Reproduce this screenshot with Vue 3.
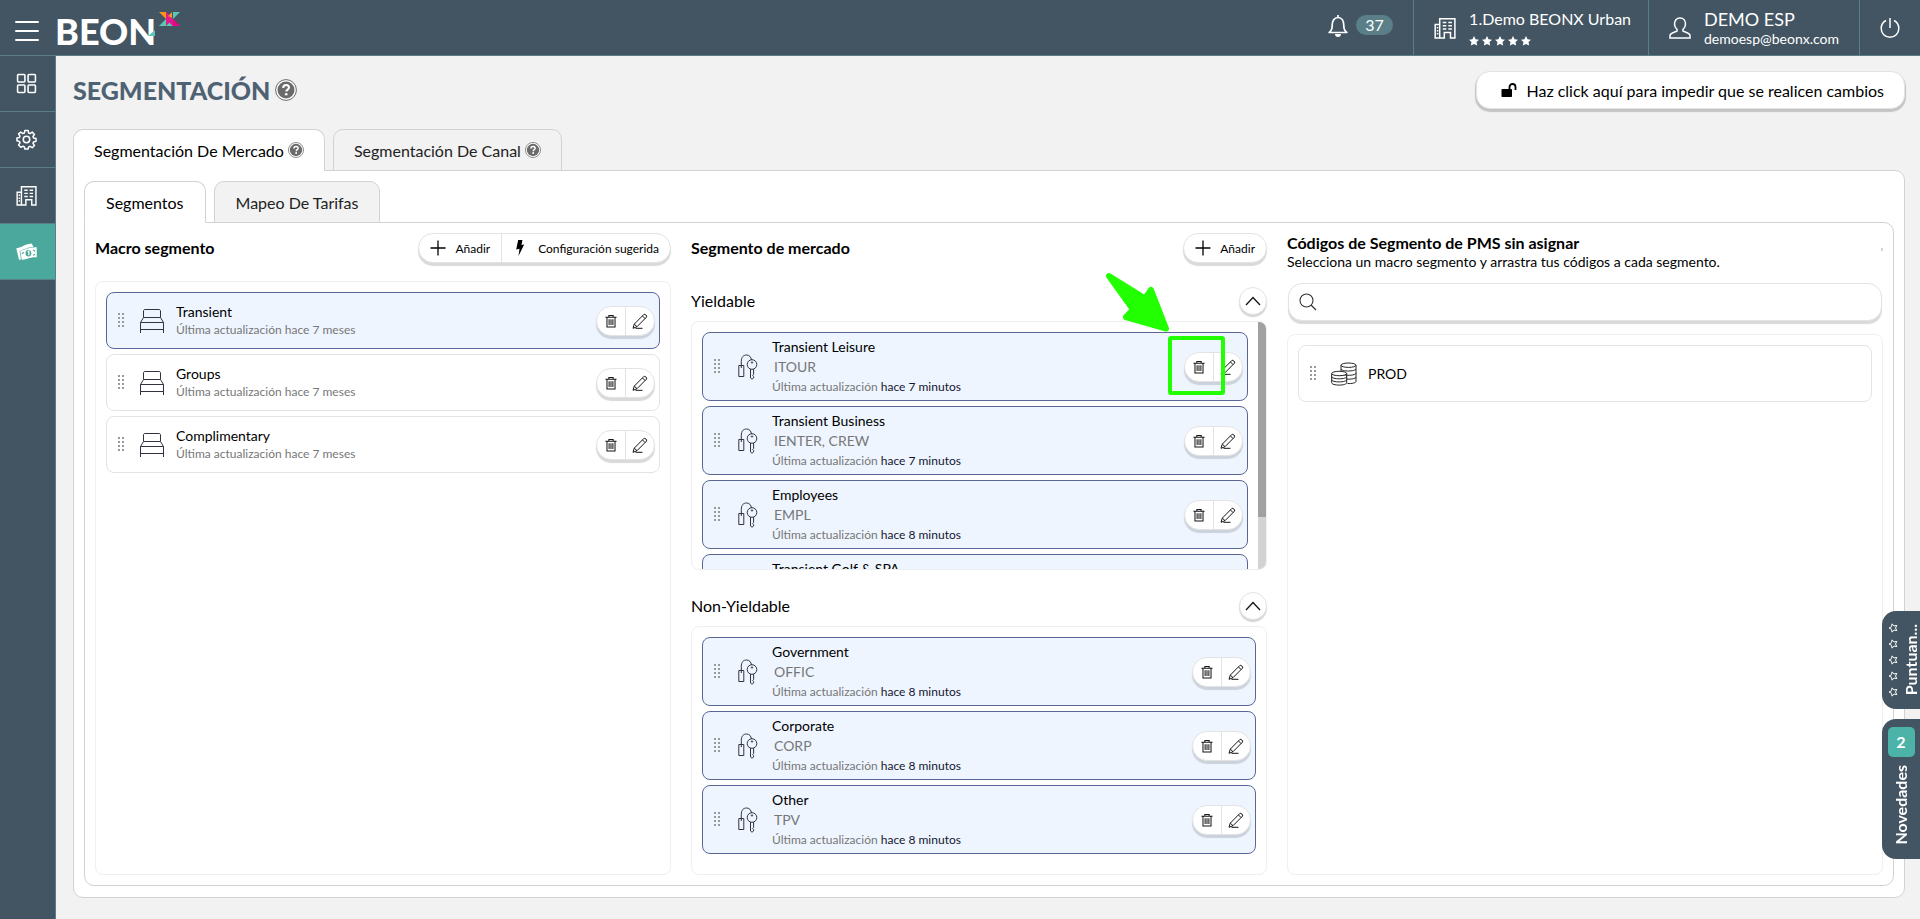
<script setup>
import { ref } from 'vue'

const search = ref('')

const sideItems = [
  { icon: 'i-grid', label: 'Panel' },
  { icon: 'i-gear', label: 'Ajustes' },
  { icon: 'i-building', label: 'Hotel' },
  { icon: 'i-money', label: 'Tarifas', active: true }
]

const macroSegments = [
  { name: 'Transient', selected: true },
  { name: 'Groups' },
  { name: 'Complimentary' }
]

const marketGroups = [
  {
    name: 'Yieldable',
    scroll: true,
    items: [
      { name: 'Transient Leisure', codes: 'ITOUR', ago: 'hace 7 minutos' },
      { name: 'Transient Business', codes: 'IENTER, CREW', ago: 'hace 7 minutos' },
      { name: 'Employees', codes: 'EMPL', ago: 'hace 8 minutos' },
      { name: 'Transient Golf & SPA' }
    ]
  },
  {
    name: 'Non-Yieldable',
    scroll: false,
    items: [
      { name: 'Government', codes: 'OFFIC', ago: 'hace 8 minutos' },
      { name: 'Corporate', codes: 'CORP', ago: 'hace 8 minutos' },
      { name: 'Other', codes: 'TPV', ago: 'hace 8 minutos' }
    ]
  }
]
</script>

<template>
  <svg class="sprite" aria-hidden="true">
    <symbol id="i-grid" viewBox="0 0 20 20">
      <g fill="none" stroke="currentColor" stroke-width="1.5">
        <rect x="1.5" y="1.5" width="7" height="7" rx="0.8" /><rect x="11.5" y="1.5" width="7" height="7" rx="0.8" />
        <rect x="1.5" y="11.5" width="7" height="7" rx="0.8" /><rect x="11.5" y="11.5" width="7" height="7" rx="0.8" />
      </g>
    </symbol>
    <symbol id="i-gear" viewBox="0 0 22 22">
      <g fill="none" stroke="currentColor" stroke-width="1.6" stroke-linejoin="round">
        <path d="M9.3 1.5h3.4l.5 2.7 1.5.6 2.3-1.5 2.3 2.4-1.5 2.2.6 1.6 2.6.5v2.900l-2.600.6-.6 1.500 1.500 2.300-2.300 2.300-2.300-1.500-1.500.6-.5 2.300H9.300l-.5-2.300-1.500-.6L5 19.100l-2.300-2.300 1.500-2.300-.6-1.500L1 12.400V9.500L3.600 9l.6-1.600-1.500-2.200L5 3.300l2.300 1.500 1.500-.6z" />
        <circle cx="11" cy="11" r="3.400" />
      </g>
    </symbol>
    <symbol id="i-building" viewBox="0 0 22 22">
      <g fill="none" stroke="currentColor" stroke-width="1.500">
        <path d="M5.700 21V1.800h15.200V21h-4.400v-5.500h-6.200V21z M5.500 7.500H1.200V21H6" />
        <path d="M8.700 5.500h3.600M14.300 5.500h3.600M8.700 8.800h3.600M14.300 8.800h3.600M8.700 12h3.600M14.300 12h3.600M2.800 10.800h1.500M2.800 13.800h1.500M2.800 16.800h1.500" />
      </g>
    </symbol>
    <symbol id="i-money" viewBox="0 0 22 18">
      <path d="M.3 5.500C5 5.500 8 1.500 16.500.6l1.800 3.600C11 4.500 8 7.500 3.700 7.900l1.500 9.300-2 .6z" fill="currentColor" />
      <path d="M4.300 7.600C9 8 13 4 21.700 4.500V15.200c-8-.5-11 3-15.700 2.500z" fill="currentColor" />
      <ellipse cx="13" cy="10.800" rx="3" ry="3.500" fill="#4ba89d" />
      <path d="M12.200 9.500l1.300-.8v4.200" fill="none" stroke="#fff" stroke-width="1.300" />
      <path d="M6.300 11.500l2-1.700M18 7.300l2 1.500M18 13l2-1" stroke="#4ba89d" stroke-width="1.200" />
    </symbol>
    <symbol id="i-bell" viewBox="0 0 20 24">
      <path d="M10 1v2.500M1.200 18.500c2.500-1.800 3-3.500 3-7 0-4.500 2-8 5.800-8s5.800 3.500 5.800 8c0 3.500.5 5.200 3 7z" fill="none" stroke="currentColor" stroke-width="1.700" stroke-linejoin="round" />
      <path d="M7 20h6c0 2-1.300 3-3 3s-3-1-3-3z" fill="currentColor" />
    </symbol>
    <symbol id="i-user" viewBox="0 0 22 22">
      <path d="M11 1c-3.600 0-5.500 2.700-5.500 6 0 2.500 1.300 4.300 2.500 5.300v1.800C5.500 15.300 1 16 1 18.500V21h20v-2.500c0-2.500-4.500-3.200-7-4.400v-1.800c1.200-1 2.500-2.800 2.500-5.300 0-3.300-1.900-6-5.500-6z" fill="none" stroke="currentColor" stroke-width="1.500" />
    </symbol>
    <symbol id="i-power" viewBox="0 0 20 22">
      <path d="M10 1v10M6 3.500C3 5 1.200 8 1.200 11.500a8.800 8.800 0 0 0 17.600 0C18.800 8 17 5 14 3.500" fill="none" stroke="currentColor" stroke-width="1.500" />
    </symbol>
    <symbol id="i-star" viewBox="0 0 12 12">
      <path d="M6 0l1.900 3.900 4.100.5-3 2.900.8 4.200L6 9.500l-3.800 2 .8-4.200L0 4.400l4.100-.5z" fill="currentColor" />
    </symbol>
    <symbol id="i-star-o" viewBox="0 0 12 12">
      <path d="M6 1.200l1.500 3.100 3.500.5-2.500 2.400.6 3.400L6 9l-3.100 1.600.6-3.400L1 4.800l3.500-.5z" fill="none" stroke="currentColor" stroke-width="1.200" />
    </symbol>
    <symbol id="i-unlock" viewBox="0 0 16 14">
      <rect x="0.500" y="6" width="10.500" height="8" rx="0.800" fill="currentColor" />
      <path d="M8.500 6V4a3 3 0 0 1 6 0v3" fill="none" stroke="currentColor" stroke-width="1.800" />
    </symbol>
    <symbol id="i-help" viewBox="0 0 22 22">
      <circle cx="11" cy="11" r="10.400" fill="#fff" stroke="#6b6b6b" stroke-width="1" />
      <circle cx="11" cy="11" r="8.500" fill="#6b6b6b" />
      <path d="M8.200 9c0-1.900 1.200-2.900 2.900-2.900s2.900 1 2.900 2.500c0 2-2.700 2-2.700 4" fill="none" stroke="#fff" stroke-width="2" />
      <circle cx="11.200" cy="15.200" r="1.300" fill="#fff" />
    </symbol>
    <symbol id="i-plus" viewBox="0 0 16 16">
      <path d="M8 .5v15M.5 8h15" stroke="currentColor" stroke-width="1.300" />
    </symbol>
    <symbol id="i-bolt" viewBox="0 0 10 16">
      <path d="M3.200 0h4.200L6.500 5l2.700-.6L3.500 16l1-7.200-3.300.8z" fill="currentColor" />
    </symbol>
    <symbol id="i-grip" viewBox="0 0 6 16">
      <g fill="#9a9a9a">
        <rect width="2" height="2" /><rect x="4" width="2" height="2" />
        <rect y="4" width="2" height="2" /><rect x="4" y="4" width="2" height="2" />
        <rect y="8" width="2" height="2" /><rect x="4" y="8" width="2" height="2" />
        <rect y="12" width="2" height="2" /><rect x="4" y="12" width="2" height="2" />
      </g>
    </symbol>
    <symbol id="i-bed" viewBox="0 0 26 26">
      <path d="M1.500 25V14.500L4.500 9.500V3c0-1 .7-1.500 1.500-1.500h14c.8 0 1.500.5 1.500 1.500v6.500l3 5V25M4.500 9.500h17M1.500 14.500h23M1.500 21.500h23" fill="none" stroke="#33333f" stroke-width="1" />
    </symbol>
    <symbol id="i-key" viewBox="0 0 20 26">
      <g fill="none" stroke="#33333f" stroke-width="1">
        <path d="M.8 11.500h5v11h-5zM3.300 14V7.500C3.300 3 5.500 1 8.500 1s4.500 2 5 5" />
        <circle cx="14" cy="10.500" r="4.800" /><circle cx="14" cy="8.500" r="0.700" />
        <path d="M12.500 15v9l1.500 1.200 1.600-1.200v-1.500l-.9-1 .9-1V15" />
      </g>
    </symbol>
    <symbol id="i-trash" viewBox="0 0 14 16">
      <path d="M.5 3.500h13M4.500 3.500v-2h5v2M2.300 3.500V15h9.400V3.500M4.800 6v6.800M7 6v6.800M9.200 6v6.800" fill="none" stroke="#151515" stroke-width="1.200" />
    </symbol>
    <symbol id="i-pencil" viewBox="0 0 16 16">
      <path d="M1 15.300l1.300-4.200L11.800 1.500c1-1 3.700 1.500 2.700 2.600L5 13.700zM2.300 11.100L5 13.700M10.500 3l2.600 2.600M3.500 15.300h7" fill="none" stroke="#151515" stroke-width="1" />
    </symbol>
    <symbol id="i-chevron" viewBox="0 0 16 10">
      <path d="M1 9l7-7.500L15 9" fill="none" stroke="#151515" stroke-width="1.300" />
    </symbol>
    <symbol id="i-search" viewBox="0 0 18 18">
      <circle cx="7.500" cy="7.500" r="6.500" fill="none" stroke="#333" stroke-width="1.100" />
      <path d="M12 12l5 5" stroke="#333" stroke-width="1.200" />
    </symbol>
    <symbol id="i-coins" viewBox="0 0 26 24">
      <g fill="none" stroke="#222" stroke-width="1">
        <ellipse cx="17.500" cy="3.200" rx="7.500" ry="2.200" />
        <path d="M10 3.200v6M25 3.200V19.500c0 1.300-4 2.300-8.500 2M10 7c.5 1.500 4 2 7.500 2s7-.8 7.500-2M13 12.800c4 1 11 .5 12-1.500M15.800 17c4 .5 8.700-.3 9.200-1.800" />
        <ellipse cx="8.200" cy="11.500" rx="7.500" ry="2.200" fill="#fff" />
        <path d="M.7 11.500v9.300c0 1.300 3.500 2.300 7.500 2.300s7.500-1 7.500-2.300v-9.300M.7 14.600c0 1.300 3.500 2.200 7.500 2.200s7.500-.9 7.500-2.200M.7 17.700c0 1.300 3.500 2.200 7.500 2.200s7.500-.9 7.500-2.200" />
      </g>
    </symbol>
  </svg>

  <div class="app">
    <header class="topbar">
      <button class="menu" aria-label="Menú"><span></span><span></span><span></span></button>
      <a class="logo" href="#" aria-label="BEONX">
        <span class="logo-text">BEON</span>
        <svg class="logo-notch" viewBox="0 0 7 6"><path d="M7 0v6H0z" fill="#5cc8b4" /></svg>
        <svg class="logo-x" viewBox="0 0 21 14">
          <path d="M0 0h7v7z" fill="#f7941d" /><path d="M7 0l7 7H7z" fill="#e6178f" />
          <path d="M13 0v6L9 4z" fill="#f7941d" /><path d="M14 0h7l-7 7z" fill="#5cc8b4" />
          <path d="M0 14l7-7v7z" fill="#5cc8b4" /><path d="M7 7h7l-7 7z" fill="#e6178f" />
          <path d="M7 14l3.500-3.500L14 14z" fill="#5cc8b4" /><path d="M14 7l7 7h-7z" fill="#ec008c" />
          <path d="M10.500 10.500L14 7v7z" fill="#e6178f" />
        </svg>
      </a>
      <div class="spacer"></div>
      <button class="alerts" aria-label="Notificaciones">
        <svg class="bell"><use href="#i-bell" /></svg>
        <span class="count">37</span>
      </button>
      <button class="top-cell hotel">
        <svg class="i22"><use href="#i-building" /></svg>
        <span class="cell-text">
          <span class="hotel-name">1.Demo BEONX Urban</span>
          <span class="stars"><svg v-for="n in 5" :key="n"><use href="#i-star" /></svg></span>
        </span>
      </button>
      <button class="top-cell user">
        <svg class="i22"><use href="#i-user" /></svg>
        <span class="cell-text">
          <span class="user-name">DEMO ESP</span>
          <span class="user-mail">demoesp@beonx.com</span>
        </span>
      </button>
      <button class="top-cell power" aria-label="Salir"><svg><use href="#i-power" /></svg></button>
    </header>

    <div class="body">
      <nav class="side">
        <a v-for="s in sideItems" :key="s.icon" href="#" :aria-label="s.label" :class="{ active: s.active }">
          <svg><use :href="'#' + s.icon" /></svg>
        </a>
      </nav>

      <main class="main">
        <div class="page-head">
          <h1>SEGMENTACIÓN</h1>
          <svg class="i22 help"><use href="#i-help" /></svg>
          <div class="spacer"></div>
          <button class="lock"><svg><use href="#i-unlock" /></svg>Haz click aquí para impedir que se realicen cambios</button>
        </div>

        <div class="tabs">
          <button class="tab on">Segmentación De Mercado<svg><use href="#i-help" /></svg></button>
          <button class="tab">Segmentación De Canal<svg><use href="#i-help" /></svg></button>
        </div>
        <div class="panel outer">
          <div class="tabs">
            <button class="tab on">Segmentos</button>
            <button class="tab">Mapeo De Tarifas</button>
          </div>
          <div class="panel inner">
            <section class="col">
              <div class="col-head">
                <h2>Macro segmento</h2>
                <div class="pill">
                  <button class="add"><svg><use href="#i-plus" /></svg>Añadir</button>
                  <button class="suggest"><svg><use href="#i-bolt" /></svg>Configuración sugerida</button>
                </div>
              </div>
              <div class="list">
                <div class="cards">
                  <article v-for="m in macroSegments" :key="m.name" class="card" :class="{ selected: m.selected }">
                    <svg class="grip"><use href="#i-grip" /></svg>
                    <svg class="bed"><use href="#i-bed" /></svg>
                    <div class="info">
                      <div class="name">{{ m.name }}</div>
                      <div class="updated">Última actualización hace 7 meses</div>
                    </div>
                    <div class="pill tools">
                      <button aria-label="Eliminar"><svg class="trash"><use href="#i-trash" /></svg></button>
                      <button aria-label="Editar"><svg class="pencil"><use href="#i-pencil" /></svg></button>
                    </div>
                  </article>
                </div>
              </div>
            </section>

            <section class="col market">
              <div class="col-head">
                <h2>Segmento de mercado</h2>
                <div class="pill">
                  <button class="add"><svg><use href="#i-plus" /></svg>Añadir</button>
                </div>
              </div>
              <div v-for="g in marketGroups" :key="g.name" class="group">
                <div class="group-head">
                  <h3>{{ g.name }}</h3>
                  <button class="round" aria-label="Plegar"><svg><use href="#i-chevron" /></svg></button>
                </div>
                <div class="list">
                  <div class="cards">
                    <article v-for="s in g.items" :key="s.name" class="card tall selected">
                      <svg class="grip"><use href="#i-grip" /></svg>
                      <svg class="key"><use href="#i-key" /></svg>
                      <div class="info">
                        <div class="name">{{ s.name }}</div>
                        <div v-if="s.codes" class="codes">{{ s.codes }}</div>
                        <div v-if="s.ago" class="updated">Última actualización <b>{{ s.ago }}</b></div>
                      </div>
                      <div class="pill tools">
                        <button aria-label="Eliminar"><svg class="trash"><use href="#i-trash" /></svg></button>
                        <button aria-label="Editar"><svg class="pencil"><use href="#i-pencil" /></svg></button>
                      </div>
                    </article>
                  </div>
                  <div v-if="g.scroll" class="track"><div class="thumb"></div></div>
                </div>
              </div>
              <svg class="callout" viewBox="0 0 122 126" aria-hidden="true">
                <path d="M5 5L41 27.500 47 19l15 38.500L22 46l7-7.500z" fill="#2f0" stroke="#2f0" stroke-width="6" stroke-linejoin="round" />
                <rect x="66" y="67" width="53" height="55" rx="1" fill="none" stroke="#2f0" stroke-width="4" />
              </svg>
            </section>

            <section class="col">
              <h2 class="pms-title">Códigos de Segmento de PMS sin asignar</h2>
              <p class="pms-sub">Selecciona un macro segmento y arrastra tus códigos a cada segmento.</p>
              <span class="mark"></span>
              <label class="search">
                <svg><use href="#i-search" /></svg>
                <input v-model="search" type="text" aria-label="Buscar código" />
              </label>
              <div class="list">
                <div class="cards">
                  <article class="card">
                    <svg class="grip"><use href="#i-grip" /></svg>
                    <svg class="coins"><use href="#i-coins" /></svg>
                    <div class="info"><div class="name">PROD</div></div>
                  </article>
                </div>
              </div>
            </section>
          </div>
        </div>
      </main>
    </div>

    <div class="floaters">
      <button class="floater rate">
        <span class="rate-stars"><svg v-for="n in 5" :key="n"><use href="#i-star-o" /></svg></span>
        <span class="vertical">Puntuan...</span>
      </button>
      <button class="floater news">
        <span class="badge">2</span>
        <span class="vertical">Novedades</span>
      </button>
    </div>
  </div>
</template>

<style>
body { margin: 0; background: #f2f2f2; }
</style>

<style scoped>
.sprite { position: absolute; width: 0; height: 0; }
* { box-sizing: border-box; }
svg { display: block; flex: none; }
h1, h2, h3, p { margin: 0; }
button, input { font: inherit; color: inherit; border: 0; background: none; padding: 0; margin: 0; }
button { cursor: pointer; }

.app {
  display: flex;
  flex-direction: column;
  height: 100vh;
  min-height: 700px;
  overflow: hidden;
  background: #f2f2f2;
  color: #000;
  font-family: Lato, "Liberation Sans", sans-serif;
  font-size: 16px;
}
.spacer { flex: 1; }
.i22 { width: 22px; height: 22px; }

.topbar {
  display: flex;
  align-items: stretch;
  height: 56px;
  flex: none;
  background: #435563;
  border-bottom: 1px solid #5b7f88;
  color: #fff;
}
.menu { display: flex; flex-direction: column; justify-content: center; gap: 7px; margin: 6px 16px 0 15px; width: 24px; }
.menu span { height: 2px; border-radius: 1px; background: #fff; }
.logo { position: relative; display: block; width: 124px; color: #fff; text-decoration: none; }
.logo-text { display: block; padding-top: 9px; font-size: 36px; line-height: 44px; font-weight: 900; }
.logo-notch { position: absolute; left: 93px; top: 30px; width: 7px; height: 6px; }
.logo-x { position: absolute; left: 104px; top: 12px; width: 21px; height: 14px; }
.alerts { display: flex; align-items: flex-start; gap: 8px; padding: 14px 20px 0 0; }
.bell { width: 20px; height: 24px; }
.count { width: 37px; height: 20px; margin-top: 1px; border-radius: 10px; background: #5b7f88; font-size: 16px; line-height: 20px; }
.top-cell { display: flex; align-items: center; padding: 0 19px; gap: 13px; border-left: 1px solid #5b7f88; text-align: left; }
.cell-text { display: block; }
.hotel { padding: 0 17px 0 20px; }
.hotel-name { display: block; font-size: 16px; line-height: 20px; }
.stars { display: flex; gap: 3px; padding-top: 7px; }
.stars svg { width: 10px; height: 10px; }
.user { padding: 0 20px; }
.user-name { display: block; font-size: 18px; line-height: 22px; }
.user-mail { display: block; font-size: 14px; line-height: 18px; }
.power { padding: 0 20px; }
.power svg { width: 20px; height: 22px; }

.body { flex: 1; display: flex; min-height: 0; }
.side { width: 56px; flex: none; background: #435563; border-right: 1px solid #5b7f88; }
.side a { display: flex; align-items: center; justify-content: center; height: 56px; padding-right: 2px; color: #fff; border-bottom: 1px solid #5b7f88; }
.side a.active { background: #4ba89d; }
.side svg { width: 21px; height: 21px; }

.main { flex: 1; min-width: 0; display: flex; flex-direction: column; padding: 15px 15px 21px 17px; }
.page-head { display: flex; align-items: center; height: 38px; margin-bottom: 20px; }
h1 { font-size: 25px; line-height: 30px; font-weight: 900; color: #4f6273; }
.help { margin-left: 5px; }
.lock {
  display: flex; align-items: center; gap: 9px; height: 38px; padding: 0 20px 0 24px;
  border: 1px solid #e3e3e3; border-radius: 14px; background: #fff; box-shadow: 0 2px 1px 1px #c4c4c4; font-size: 16px;
}
.lock svg { width: 16px; height: 14px; }

.tabs { display: flex; gap: 8px; }
.tab {
  display: flex; align-items: center; gap: 4px; height: 42px; padding: 0 20px; margin-bottom: -1px; position: relative;
  border: 1px solid #d2d2d2; border-radius: 10px 10px 0 0; background: #f2f2f2; color: #222; font-size: 16px;
}
.tab.on { background: #fff; border-bottom-color: #fff; color: #000; z-index: 1; }
.tab svg { width: 16px; height: 16px; }
.panel { flex: 1; min-height: 0; background: #fff; border: 1px solid #d2d2d2; border-radius: 0 10px 10px 10px; }
.outer { display: flex; flex-direction: column; padding: 10px 10px 11px; }
.inner { display: grid; grid-template-columns: repeat(3, minmax(0, 1fr)); padding: 10px; }
.inner .tab, .outer .tab { padding: 0 21px; }

.col { position: relative; display: flex; flex-direction: column; min-height: 0; padding-right: 20px; }
.col:last-child { padding-right: 0; }
.col-head { display: flex; justify-content: space-between; align-items: flex-start; height: 48px; flex: none; }
h2 { font-size: 16px; line-height: 30px; font-weight: 700; }
.pill { display: flex; height: 30px; border: 1px solid #e3e3e3; border-radius: 15px; background: #fff; box-shadow: 0 3px 1px #d9d9d9; }
.pill button { display: flex; align-items: center; font-size: 12px; }
.pill button + button { border-left: 1px solid #e3e3e3; }
.add { gap: 9px; padding: 0 11px; }
.add svg { width: 16px; height: 16px; }
.suggest { gap: 13px; padding: 0 11px 0 13px; }
.suggest svg { width: 10px; height: 16px; }

.list { flex: 1; min-height: 0; display: flex; border: 1px solid #efefef; border-radius: 8px; overflow: hidden; }
.cards { flex: 1; min-width: 0; display: flex; flex-direction: column; gap: 5px; padding: 10px; overflow-y: auto; scrollbar-width: none; }
.track { width: 8px; background: #d3d3d3; }
.thumb { height: 79%; background: #a1a1a1; }
.card { display: flex; align-items: center; flex: none; height: 57px; padding: 0 4px 0 11px; border: 1px solid #e3e3e3; border-radius: 8px; background: #fff; }
.card.tall { height: 69px; }
.card.selected { border-color: #5a6796; background: #eef5ff; }
.grip { width: 6px; height: 16px; }
.bed { width: 26px; height: 26px; margin: 0 11px 0 15px; }
.key { width: 20px; height: 26px; margin: 0 14px 0 18px; }
.coins { width: 26px; height: 24px; margin: 0 11px 0 15px; }
.info { flex: 1; min-width: 0; }
.tall .info { align-self: flex-start; padding-top: 5px; }
.name { font-size: 14px; line-height: 18px; }
.updated { font-size: 12px; line-height: 18px; color: #777; }
.updated b { font-weight: 400; color: #151530; }
.codes { padding-left: 2px; font-size: 14px; line-height: 22px; color: #777; }
.tools { width: 59px; }
.tools button { flex: 1; justify-content: center; }
.card.selected .tools { box-shadow: 0 3px 1px #cbd2dc; }
.trash { width: 12px; height: 14px; }
.pencil { width: 16px; height: 16px; }

.group { flex: 1 1 0; min-height: 0; display: flex; flex-direction: column; }
.group + .group { margin-top: 16px; }
.group-head { display: flex; align-items: center; justify-content: space-between; height: 40px; flex: none; }
h3 { font-size: 16px; line-height: 20px; font-weight: 400; }
.round { display: flex; align-items: center; justify-content: center; width: 28px; height: 28px; border: 1px solid #e3e3e3; border-radius: 50%; background: #fff; box-shadow: 0 2px 1px #d5d5d5; }
.round svg { width: 16px; height: 10px; }
.callout { position: absolute; top: 38px; right: 61px; width: 122px; height: 126px; pointer-events: none; }

.pms-title { line-height: 20px; }
.pms-sub { font-size: 14px; line-height: 18px; }
.mark { position: absolute; top: 15px; right: 0; width: 2px; height: 3px; background: #d5d5d5; }
.search {
  display: flex; align-items: center; height: 38px; margin: 12px 1px 13px; padding: 0 10px; flex: none;
  border: 1px solid #e3e3e3; border-radius: 14px; background: #fff; box-shadow: 0 3px 1px #d9d9d9;
}
.search svg { width: 18px; height: 18px; }
.search input { flex: 1; height: 34px; padding: 0 8px; outline: 0; }

.floaters { position: fixed; right: 0; bottom: 60px; width: 38px; display: flex; flex-direction: column; gap: 10px; }
.floater { display: flex; align-items: center; border-radius: 14px 0 0 14px; background: #435563; color: #fff; }
.vertical { writing-mode: vertical-rl; rotate: 180deg; white-space: nowrap; }
.rate { height: 98px; gap: 3px; padding-left: 6px; overflow: hidden; }
.rate-stars { display: flex; flex-direction: column; gap: 6px; }
.rate-stars svg { width: 10px; height: 10px; rotate: -90deg; }
.rate .vertical { font-size: 16px; line-height: 20px; font-weight: 700; }
.news { height: 140px; flex-direction: column; gap: 8px; padding-top: 8px; }
.badge { width: 27px; height: 30px; border-radius: 5px; background: #4bb3a7; font-size: 16px; line-height: 30px; font-weight: 700; }
.news .vertical { font-size: 16px; line-height: 20px; font-weight: 700; }
</style>
